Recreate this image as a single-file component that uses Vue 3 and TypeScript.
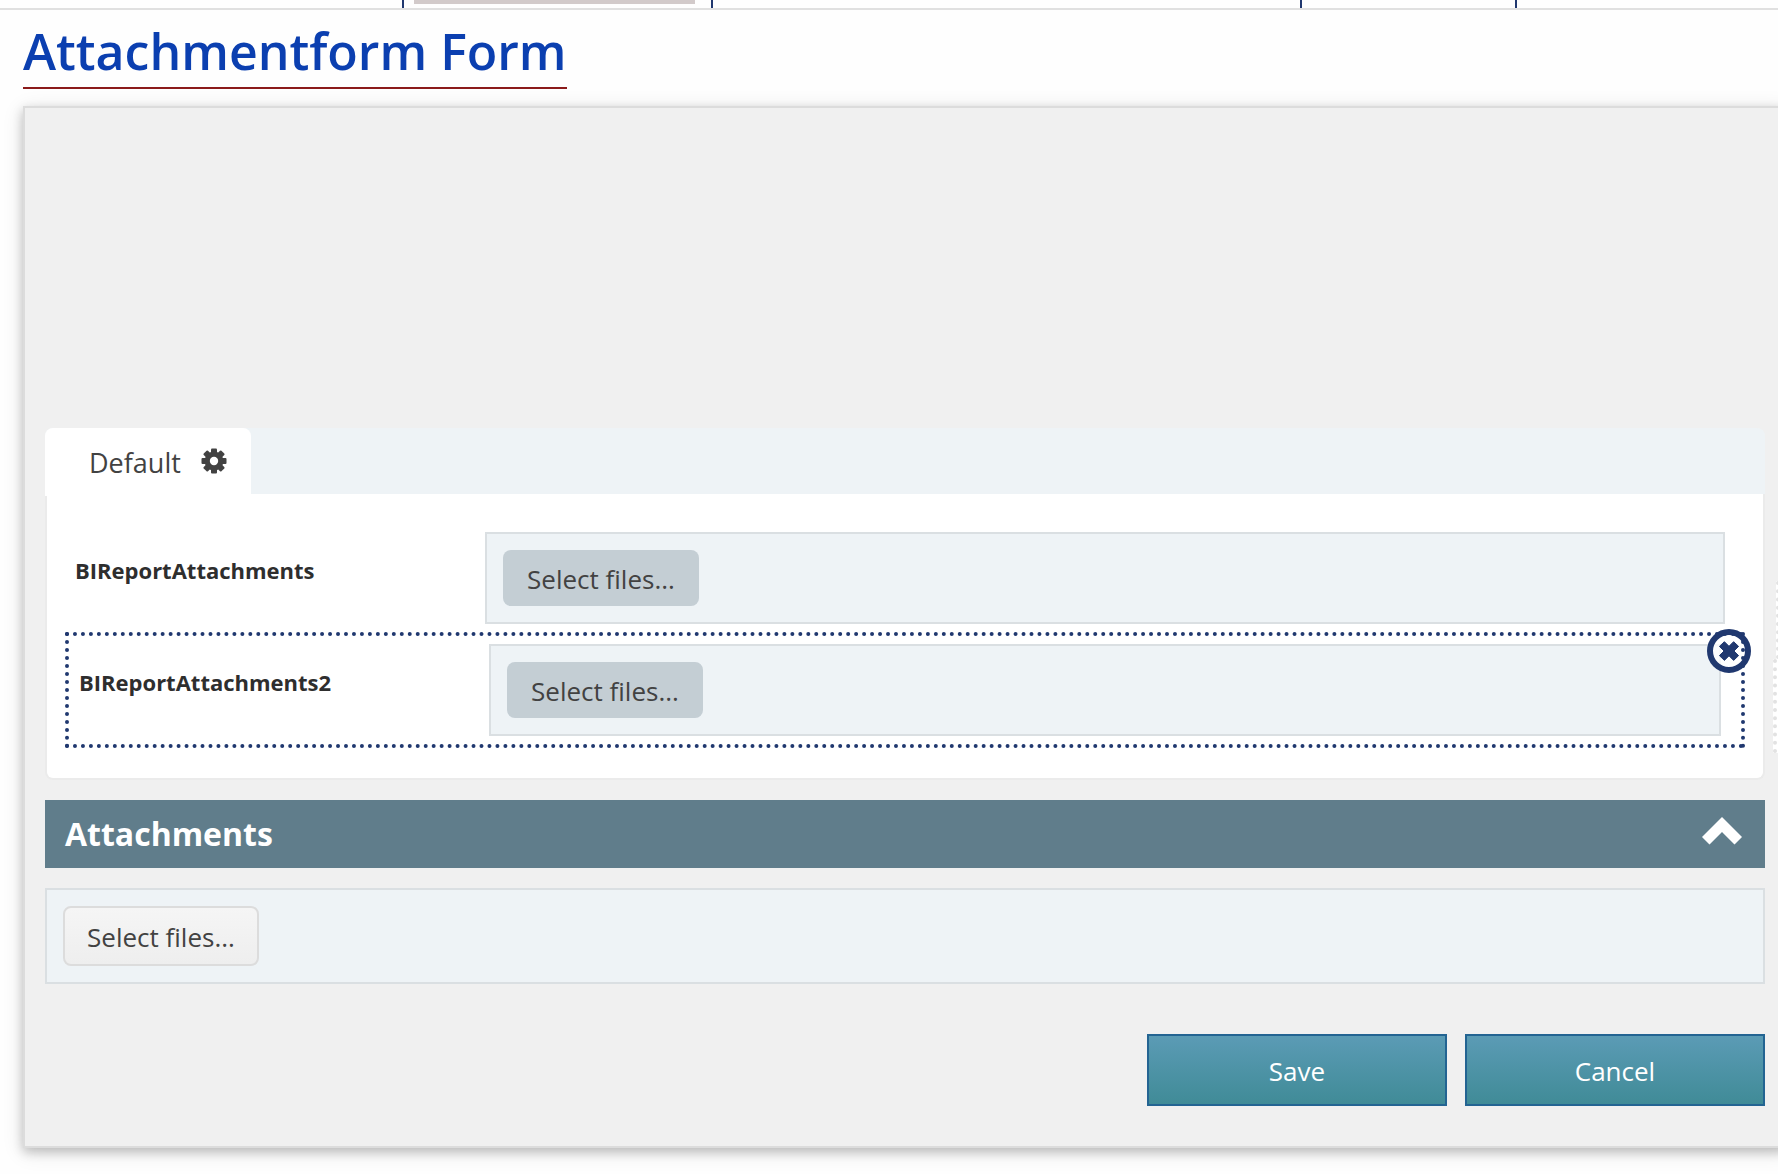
<script setup lang="ts">
interface UploadField {
  id: string
  label: string
  selected: boolean
}

const fields: UploadField[] = [
  { id: 'report-attachments', label: 'BIReportAttachments', selected: false },
  { id: 'report-attachments-2', label: 'BIReportAttachments2', selected: true },
]
</script>

<template>
  <div class="page">
    <header class="topbar">
      <span class="cell cell-first"></span>
      <span class="cell cell-active"><span class="marker"></span></span>
      <span class="cell cell-wide"></span>
      <span class="cell cell-narrow"></span>
    </header>

    <main class="main">
      <h1 class="title">Attachmentform Form</h1>

      <form class="panel" @submit.prevent>
        <div class="canvas"></div>

        <section class="tabs">
          <div class="tab-strip">
            <button type="button" class="tab">
              <span>Default</span>
              <svg class="gear" viewBox="0 0 26 26" aria-hidden="true">
                <g fill="#424242">
                  <rect v-for="a in [0, 45, 90, 135]" :key="a" x="10" y="0.5" width="6" height="25" rx="1" :transform="`rotate(${a} 13 13)`" />
                  <circle cx="13" cy="13" r="9.4" />
                </g>
                <circle cx="13" cy="13" r="4.2" fill="#fff" />
              </svg>
            </button>
          </div>
          <div class="tab-body">
            <div v-for="f in fields" :key="f.id" class="row" :class="{ selected: f.selected }">
              <label class="label" :for="f.id">{{ f.label }}</label>
              <div class="drop">
                <button :id="f.id" type="button" class="pick">Select files...</button>
              </div>
              <button v-if="f.selected" type="button" class="remove" aria-label="Remove field">
                <svg viewBox="0 0 44 44" aria-hidden="true">
                  <circle cx="22" cy="22" r="19" fill="#fff" fill-opacity="0.75" stroke="#20386f" stroke-width="6" />
                  <path d="M22 17.3 26.6 12.7 31.6 17.4 27 22 31.6 26.6 26.6 31.4 22 26.8 17.4 31.4 12.4 26.6 17 22 12.4 17.4 17.4 12.7Z" fill="#20386f" stroke="#20386f" stroke-linejoin="round" />
                </svg>
              </button>
            </div>
          </div>
          <div class="ghost" aria-hidden="true"><i></i><b></b></div>
        </section>

        <button type="button" class="section-bar">
          <span>Attachments</span>
          <svg class="chevron" viewBox="0 0 40 28" aria-hidden="true">
            <path d="M20 0 40 20 32.500 27.500 20 15 7.500 27.500 0 20Z" fill="#fff" />
          </svg>
        </button>

        <div class="drop drop-large">
          <button type="button" class="pick pick-light">Select files...</button>
        </div>

        <div class="actions">
          <button type="submit" class="action">Save</button>
          <button type="button" class="action">Cancel</button>
        </div>
      </form>
    </main>
  </div>
</template>

<style>
body {
  margin: 0;
  background: #fefefe;
}
</style>

<style scoped>
.page {
  overflow: hidden;
  padding-bottom: 26px;
  font-family: "Open Sans", "Noto Sans", sans-serif;
  color: #424242;
}

.page *,
.page *::after {
  box-sizing: border-box;
}

button {
  margin: 0;
  padding: 0;
  border: 0;
  background: none;
  font: inherit;
  color: inherit;
}

.topbar {
  display: flex;
  height: 10px;
  border-bottom: 2px solid #e0e0e0;
}

.cell {
  border-right: 2px solid #20386f;
}

.cell-first {
  width: 404px;
}

.cell-active {
  width: 309px;
  padding: 0 16px 0 10px;
}

.marker {
  display: block;
  height: 4px;
  background: #d2caca;
}

.cell-wide {
  width: 589px;
}

.cell-narrow {
  width: 215px;
}

.main {
  padding-left: 23px;
}

.title {
  width: fit-content;
  height: 79px;
  margin: 0 0 17px;
  border-bottom: 2px solid #8b1a1a;
  font-size: 50px;
  font-weight: 600;
  line-height: 82px;
  color: #0b3fb0;
  white-space: nowrap;
}

.panel {
  margin-right: -9px;
  padding: 20px 20px 40px;
  border: 2px solid #dcdcdc;
  background: #f0f0f0;
  box-shadow: 0 4px 10px rgba(0, 0, 0, 0.2), 0 4px 20px rgba(0, 0, 0, 0.12);
}

.canvas {
  height: 300px;
}

.tabs {
  position: relative;
}

.tab-strip {
  display: flex;
  height: 66px;
  border-radius: 8px 8px 0 0;
  background: #eef3f6;
}

.tab {
  display: flex;
  align-items: center;
  gap: 20px;
  height: 68px;
  padding: 2px 24px 0 44px;
  border-radius: 8px 8px 0 0;
  background: #fff;
  font-size: 27px;
  line-height: 36px;
}

.gear {
  width: 26px;
  height: 26px;
  margin-bottom: 4px;
}

.tab-body {
  padding: 30px 18px;
  border: 2px solid #ebebeb;
  border-top: 0;
  border-radius: 0 0 8px 8px;
  background: #fff;
}

.row {
  position: relative;
  display: flex;
  padding: 8px 20px 8px 10px;
}

.selected {
  padding: 12px 24px 12px 14px;
}

.selected::after {
  content: "";
  position: absolute;
  inset: 0;
  border: 4px dotted #20386f;
  pointer-events: none;
}

.label {
  flex: 0 0 410px;
  padding-top: 22px;
  font-size: 22px;
  font-weight: 700;
  line-height: 32px;
  color: #2e2e2e;
}

.drop {
  flex: 1;
  padding: 16px;
  border: 2px solid #dadfe2;
  background: #eef3f6;
}

.pick {
  display: block;
  width: 196px;
  height: 56px;
  padding-top: 2px;
  border-radius: 8px;
  background: #c4ced4;
  font-size: 26px;
  line-height: 36px;
}

.pick-light {
  height: 60px;
  border: 2px solid #dcdcdc;
  background: linear-gradient(#f5f5f5, #eeeeee);
}

.remove {
  position: absolute;
  top: -3px;
  right: -6px;
  width: 44px;
  height: 44px;
}

.remove svg {
  display: block;
}

.ghost {
  position: absolute;
  top: 153px;
  right: -20px;
  width: 12px;
  height: 172px;
}

.ghost i,
.ghost b {
  display: block;
  border-left: 4px dotted #e2e2e2;
  background: #fff;
}

.ghost i {
  height: 78px;
  margin-left: 3px;
}

.ghost b {
  height: 94px;
}

.section-bar {
  display: flex;
  align-items: center;
  justify-content: space-between;
  width: 100%;
  height: 68px;
  margin: 20px 0;
  padding: 0 23px 0 20px;
  background: #607d8b;
  font-size: 32px;
  font-weight: 700;
  line-height: 48px;
  color: #fff;
}

.chevron {
  width: 40px;
  height: 28px;
  margin-bottom: 6px;
}

.actions {
  display: flex;
  justify-content: flex-end;
  gap: 18px;
  margin-top: 50px;
}

.action {
  width: 300px;
  height: 72px;
  padding-top: 2px;
  border: 2px solid #236492;
  background: linear-gradient(#5b9bb5, #408b97);
  font-size: 26px;
  line-height: 36px;
  color: #fff;
}
</style>
